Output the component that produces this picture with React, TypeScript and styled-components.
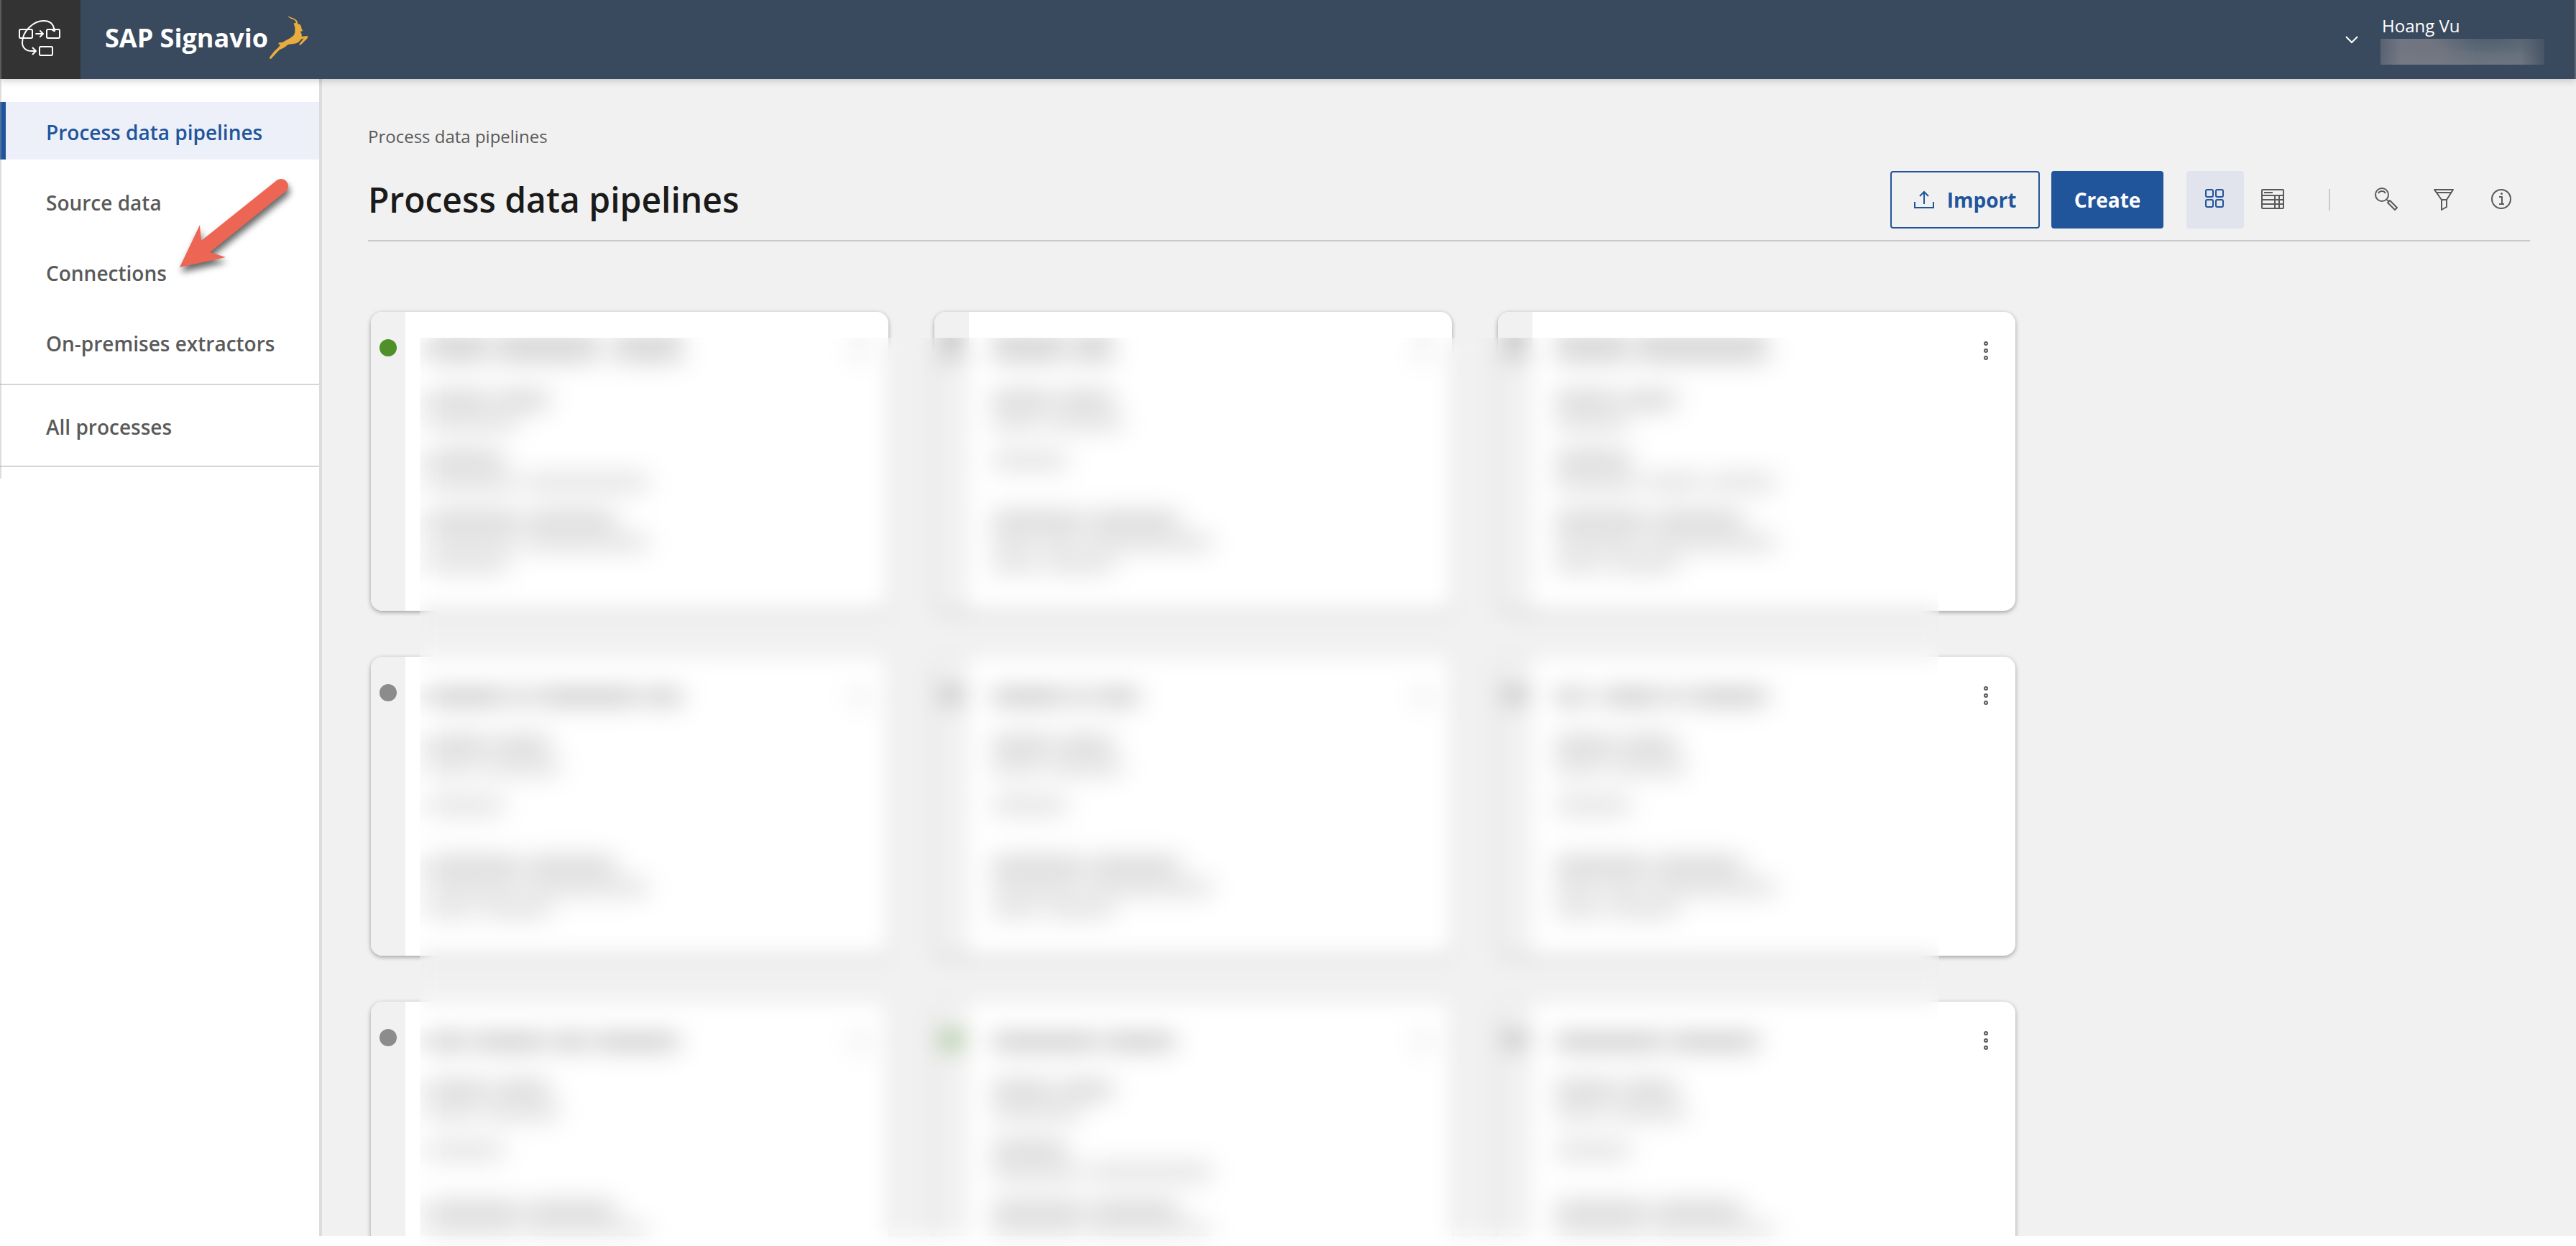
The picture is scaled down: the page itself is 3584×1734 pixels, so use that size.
import React from "react";
import styled, { createGlobalStyle, css } from "styled-components";

const GlobalStyle = createGlobalStyle`
  *, *::before, *::after { box-sizing: border-box; }
  html, body { margin: 0; padding: 0; background: #fff; }
  body, button { font-family: "Open Sans", "Noto Sans", sans-serif; }
  button { margin: 0; padding: 0; border: 0; background: none; cursor: pointer; }
  h1, h2, p, ul { margin: 0; padding: 0; }
  svg { display: block; flex: none; }
`;

const colors = {
  navy: "#39495e",
  dark: "#333333",
  blue: "#21559b",
  text: "#5a5a5a",
  heading: "#1a1a1a",
  line: "#d5d5d5",
  canvas: "#f1f1f1",
};

/* ---------- shell ---------- */

const Page = styled.div`
  position: relative;
  display: flex;
  flex-direction: column;
  height: 100vh;
  overflow: hidden;
  background: #fff;
`;

const WindowEdge = styled.span<{ $side: "left" | "right" }>`
  position: absolute;
  z-index: 5;
  top: 0;
  ${(p) => (p.$side === "left" ? "left: 0;" : "right: 0;")}
  width: 2px;
  height: ${(p) => (p.$side === "left" ? "666px" : "110px")};
  background: rgba(163, 163, 163, 0.37);
`;

const Header = styled.header`
  position: relative;
  z-index: 3;
  display: flex;
  align-items: flex-start;
  flex: none;
  height: 110px;
  padding-right: 44px;
  background: ${colors.navy};
  color: #fff;
  box-shadow: 0 2px 10px rgba(0, 0, 0, 0.2);
`;

const Launcher = styled.button`
  width: 112px;
  height: 110px;
  background: ${colors.dark};
`;

const Brand = styled.a`
  display: flex;
  align-items: flex-start;
  padding: 20px 0 0 34px;
  color: #fff;
  text-decoration: none;
`;

const BrandName = styled.span`
  width: 226px;
  font-size: 36px;
  font-weight: 700;
  line-height: 66px;
  white-space: nowrap;
`;

const Account = styled.div`
  display: flex;
  margin-left: auto;
  gap: 20px;
`;

const AccountToggle = styled.button`
  display: flex;
  align-items: center;
  justify-content: center;
  width: 40px;
  height: 110px;
  color: #fff;
`;

const AccountText = styled.div`
  width: 228px;
  padding-top: 20px;
`;

const AccountName = styled.p`
  padding-left: 2px;
  margin-bottom: 2px;
  font-size: 24px;
  font-weight: 500;
  line-height: 32px;
`;

const AccountHidden = styled.div`
  height: 36px;
  background:
    linear-gradient(90deg, rgba(57, 73, 94, 0.45), transparent 12%, transparent 86%, rgba(57, 73, 94, 0.7)),
    radial-gradient(ellipse at 66% 0, rgba(70, 86, 104, 0.6), transparent 40%),
    linear-gradient(180deg, transparent 40%, rgba(120, 126, 136, 0.5)),
    linear-gradient(90deg, #727682, #70747f 38%, #616c7a 58%, #646e7a);
`;

const Body = styled.div`
  display: flex;
  flex: 1;
  min-height: 0;
`;

/* ---------- side navigation ---------- */

const Sidebar = styled.nav`
  position: relative;
  flex: none;
  width: 448px;
  margin-bottom: 14px;
  border-right: 4px solid #dcdcdc;
  background: #fff;
`;

const NavGroup = styled.ul<{ $first?: boolean }>`
  display: flex;
  flex-direction: column;
  gap: 18px;
  padding: ${(p) => (p.$first ? "32px 0 18px" : "16px 0")};
  border-bottom: 2px solid ${colors.line};
  list-style: none;
`;

const NavLink = styled.a<{ $active?: boolean }>`
  display: block;
  padding: 4px 0 0 56px;
  border-left: 8px solid transparent;
  color: ${colors.text};
  font-size: 28px;
  font-weight: 600;
  line-height: 76px;
  text-decoration: none;
  ${(p) =>
    p.$active &&
    css`
      border-left-color: ${colors.blue};
      background: #edf0f9;
      color: ${colors.blue};
    `}
`;

const Pointer = styled.svg`
  position: absolute;
  top: 126px;
  left: 236px;
  filter: drop-shadow(2px 7px 5px rgba(0, 0, 0, 0.6));
`;

/* ---------- main area ---------- */

const Main = styled.main`
  position: relative;
  flex: 1;
  min-width: 0;
`;

const Canvas = styled.div`
  height: calc(100% - 14px);
  overflow: hidden;
  padding: 60px 64px 0;
  background: ${colors.canvas};
`;

const Breadcrumb = styled.p`
  color: ${colors.text};
  font-size: 24px;
  line-height: 40px;
`;

const TitleBar = styled.div`
  display: flex;
  align-items: flex-start;
  padding: 28px 0 16px;
  border-bottom: 2px solid #c9c9c9;
`;

const Title = styled.h1`
  flex: 1;
  color: ${colors.heading};
  font-size: 48px;
  font-weight: 600;
  line-height: 80px;
`;

const ActionButton = styled.button<{ $primary?: boolean }>`
  display: flex;
  align-items: center;
  justify-content: center;
  gap: 18px;
  width: ${(p) => (p.$primary ? "156px" : "208px")};
  height: 80px;
  margin-right: ${(p) => (p.$primary ? "32px" : "16px")};
  border: 2px solid ${colors.blue};
  border-radius: 4px;
  background: ${(p) => (p.$primary ? colors.blue : "transparent")};
  color: ${(p) => (p.$primary ? "#fff" : colors.blue)};
  font-size: 28px;
  font-weight: 700;
`;

const IconButton = styled.button<{ $active?: boolean }>`
  display: flex;
  align-items: center;
  justify-content: center;
  width: 80px;
  height: 80px;
  border-radius: 4px;
  background: ${(p) => (p.$active ? "#e1e4ed" : "transparent")};
  color: ${(p) => (p.$active ? colors.blue : colors.text)};
`;

const Separator = styled.span`
  width: 2px;
  height: 30px;
  margin: 25px 38px;
  background: #c9c9c9;
`;

const CardGrid = styled.section`
  display: grid;
  grid-template-columns: repeat(auto-fill, 720px);
  gap: 64px;
  padding: 98px 0 0 4px;
`;

/* ---------- cards ---------- */

const CardBox = styled.article`
  display: flex;
  height: 416px;
  overflow: hidden;
  border-radius: 16px;
  background: #fff;
  box-shadow: 0 2px 6px rgba(0, 0, 0, 0.35);
`;

const StatusStrip = styled.div`
  flex: none;
  width: 48px;
  padding-top: 36px;
  background: ${colors.canvas};
`;

const DotHolder = styled.div`
  display: flex;
  justify-content: center;
  padding-top: 2px;
  clip-path: inset(0 -60px -60px -60px);
`;

const veil = css`
  filter: blur(12px);
`;

const StatusDot = styled.span<{ $on: boolean; $veiled: boolean }>`
  width: 24px;
  height: 24px;
  border-radius: 50%;
  background: ${(p) => (p.$on ? "#50902a" : "#8c8c8c")};
  ${(p) => p.$veiled && veil}
`;

const CardBody = styled.div`
  flex: 1;
  padding: 34px 21px 0 32px;
  clip-path: inset(36px 0 0 20px);
`;

const CardHead = styled.div`
  display: flex;
  justify-content: space-between;
  height: 40px;
  margin-bottom: 34px;
`;

const MenuButton = styled.button<{ $veiled: boolean }>`
  display: flex;
  align-items: center;
  justify-content: center;
  width: 40px;
  height: 40px;
  ${(p) => p.$veiled && veil}
`;

const Field = styled.div`
  min-height: 60px;
  margin-bottom: 24px;
`;

const Line = styled.div<{ $tall?: boolean }>`
  display: flex;
  align-items: center;
  gap: 10px;
  height: ${(p) => (p.$tall ? "40px" : "30px")};
  ${veil}
`;

type Tone = "title" | "label" | "value";
const tones: Record<Tone, { h: number; c: string }> = {
  title: { h: 24, c: "#c4c4c4" },
  label: { h: 20, c: "#c8c8c8" },
  value: { h: 18, c: "#d4d4d4" },
};

const Word = styled.span<{ $tone: Tone }>`
  height: ${(p) => tones[p.$tone].h}px;
  border-radius: 4px;
  background: ${(p) => tones[p.$tone].c};
`;

const PrivacyMask = styled.div`
  position: absolute;
  z-index: 2;
  top: 360px;
  bottom: 0;
  left: 136px;
  width: 2114px;
  backdrop-filter: blur(14px);
`;

/* ---------- icons ---------- */

const LauncherIcon = () => (
  <svg width="112" height="110" viewBox="0 0 336 330" fill="none" stroke="#fff" strokeWidth="6" strokeLinejoin="round" aria-hidden="true">
    <rect x="81" y="123" width="54" height="36" rx="5" />
    <rect x="195" y="123" width="54" height="36" rx="5" />
    <rect x="165" y="195" width="54" height="36" rx="5" />
    <path d="M148 141H180M166 127L180 141L166 155" />
    <path d="M226 126C224 100 208 87 182 87C140 87 93 130 93 178C93 200 110 213 132 213H149M135 198L150 213L135 228" />
    <path d="M217 124L227 130L232 120" />
  </svg>
);

const Stag = () => (
  <svg width="60" height="64" viewBox="1116 60 180 192" fill="#e8ad3c" aria-hidden="true">
    <path d="M1200 66C1208 72 1226 74 1235 82C1241 88 1243 94 1243 100L1252 102L1257 110L1259 121L1264 130L1253 131L1259 142L1259 152L1285 150L1283 160L1256 187L1248 188L1250 183L1268 160L1256 164C1250 174 1242 180 1230 182L1202 186C1192 196 1180 203 1168 207L1155 220L1132 245L1125 245L1126 238L1145 214C1152 206 1160 201 1164 196L1170 186L1161 184L1165 178L1178 177C1190 170 1216 158 1227 146L1231 134L1231 116L1226 96L1235 97C1236 90 1231 84 1224 81C1214 78 1204 74 1200 66Z" />
  </svg>
);

const ChevronIcon = () => (
  <svg width="20" height="12" viewBox="0 0 20 12" fill="none" stroke="currentColor" strokeWidth="2" aria-hidden="true">
    <path d="M2 2L10 10L18 2" />
  </svg>
);

const UploadIcon = () => (
  <svg width="28" height="28" viewBox="0 0 28 28" fill="none" stroke="currentColor" strokeWidth="2" aria-hidden="true">
    <path d="M14 20V3M8 9L14 3L20 9M1 17V25H27V17" />
  </svg>
);

const Glyph = ({ children }: { children: React.ReactNode }) => (
  <svg width="40" height="40" viewBox="0 0 40 40" fill="none" stroke="currentColor" strokeWidth="2" strokeLinejoin="round" aria-hidden="true">
    {children}
  </svg>
);

const TilesIcon = () => (
  <Glyph>
    <rect x="7" y="6" width="10" height="10" rx="2" />
    <rect x="21" y="6" width="10" height="10" rx="2" />
    <rect x="7" y="20" width="10" height="10" rx="2" />
    <rect x="21" y="20" width="10" height="10" rx="2" />
  </Glyph>
);

const TableIcon = () => (
  <Glyph>
    <rect x="5" y="6" width="30" height="26" rx="1" />
    <path d="M8 10H20M5 14H35M5 20H35M5 26H35M23 14V32M29 14V32" />
  </Glyph>
);

const SearchIcon = () => (
  <Glyph>
    <circle cx="14" cy="13" r="9" />
    <path d="M9 11C11 7 17 7 19 11M21 20L23 22M22 24L25 21L35 31L32 34Z" />
  </Glyph>
);

const FilterIcon = () => (
  <Glyph>
    <path d="M7 6H33L24 20V30L17 34V20ZM9 10H31M17 20H24" />
  </Glyph>
);

const InfoIcon = () => (
  <Glyph>
    <circle cx="20" cy="19" r="13" />
    <circle cx="20.500" cy="11.500" r="1.500" fill="currentColor" stroke="none" />
    <path d="M17 16H21V26M17 26H24" />
  </Glyph>
);

const KebabIcon = () => (
  <svg width="10" height="28" viewBox="0 0 10 28" fill="#fff" stroke={colors.text} strokeWidth="2" aria-hidden="true">
    <circle cx="5" cy="4" r="2" />
    <circle cx="5" cy="14" r="2" />
    <circle cx="5" cy="24" r="2" />
  </svg>
);

/* ---------- data ---------- */

interface Pipeline {
  on?: boolean;
  title: number[];
  status: number[];
  lastRun?: number[];
  changed: number[];
  author: number[];
  hideDot?: boolean;
  hideMenu?: boolean;
}

const notRun = [66, 106];
const first = { hideMenu: true };
const middle = { hideDot: true, hideMenu: true };
const last = { hideDot: true };

const pipelines: Pipeline[] = [
  { ...first, on: true, title: [84, 140, 6, 94], status: [124], lastRun: [124, 172], changed: [124, 172], author: [110] },
  { ...middle, title: [102, 58], status: notRun, changed: [58, 54, 174], author: [64, 96] },
  { ...last, title: [102, 184], status: [102], lastRun: [116, 78, 92], changed: [116, 180], author: [64, 96] },
  { ...first, title: [108, 26, 138, 50], status: notRun, changed: [124, 172], author: [64, 96] },
  { ...middle, title: [102, 26, 56], status: notRun, changed: [124, 172], author: [64, 96] },
  { ...last, title: [40, 8, 78, 24, 104], status: notRun, changed: [58, 54, 174], author: [64, 96] },
  { ...first, title: [54, 98, 50, 116], status: notRun, changed: [124, 172], author: [64, 96] },
  { ...middle, on: true, title: [146, 98], status: [124], lastRun: [124, 172], changed: [124, 172], author: [64, 96] },
  { ...last, title: [150, 122], status: notRun, changed: [124, 172], author: [64, 96] },
];

const Words = ({ tone, widths }: { tone: Tone; widths: number[] }) => (
  <Line $tall={tone === "title"}>
    {widths.map((width, i) => (
      <Word key={i} $tone={tone} style={{ width }} />
    ))}
  </Line>
);

const Card = ({ item }: { item: Pipeline }) => (
  <CardBox>
    <StatusStrip>
      <DotHolder>
        <StatusDot $on={!!item.on} $veiled={!!item.hideDot} />
      </DotHolder>
    </StatusStrip>
    <CardBody>
      <CardHead>
        <Words tone="title" widths={item.title} />
        <MenuButton $veiled={!!item.hideMenu} aria-label="More actions">
          <KebabIcon />
        </MenuButton>
      </CardHead>
      <Field>
        <Words tone="label" widths={[84, 74]} />
        <Words tone="value" widths={item.status} />
      </Field>
      <Field>
        <Words tone={item.lastRun ? "label" : "value"} widths={[104]} />
        {item.lastRun && <Words tone="value" widths={item.lastRun} />}
      </Field>
      <Field>
        <Words tone="label" widths={[128, 122]} />
        <Words tone="value" widths={item.changed} />
        <Words tone="value" widths={item.author} />
      </Field>
    </CardBody>
  </CardBox>
);

export default function App() {
  return (
    <Page>
      <GlobalStyle />
      <WindowEdge $side="left" />
      <WindowEdge $side="right" />
      <Header>
        <Launcher aria-label="Open launcher">
          <LauncherIcon />
        </Launcher>
        <Brand href="#home">
          <BrandName>SAP Signavio</BrandName>
          <Stag />
        </Brand>
        <Account>
          <AccountToggle aria-label="Account menu">
            <ChevronIcon />
          </AccountToggle>
          <AccountText>
            <AccountName>Hoang Vu</AccountName>
            <AccountHidden />
          </AccountText>
        </Account>
      </Header>
      <Body>
        <Sidebar>
          <NavGroup $first>
            <li><NavLink href="#pipelines" $active aria-current="page">Process data pipelines</NavLink></li>
            <li><NavLink href="#source-data">Source data</NavLink></li>
            <li><NavLink href="#connections">Connections</NavLink></li>
            <li><NavLink href="#extractors">On-premises extractors</NavLink></li>
          </NavGroup>
          <NavGroup>
            <li><NavLink href="#processes">All processes</NavLink></li>
          </NavGroup>
          <Pointer width="180" height="150" viewBox="236 236 180 150" fill="#ed6553" aria-hidden="true">
            <path d="M250 372L278 313L280 335L385 251A10 10 0 0 1 399 265L292 351L314 358Z" />
          </Pointer>
        </Sidebar>
        <Main>
          <Canvas>
            <Breadcrumb>Process data pipelines</Breadcrumb>
            <TitleBar>
              <Title>Process data pipelines</Title>
              <ActionButton>
                <UploadIcon />
                Import
              </ActionButton>
              <ActionButton $primary>Create</ActionButton>
              <IconButton $active aria-label="Tile view"><TilesIcon /></IconButton>
              <IconButton aria-label="Table view"><TableIcon /></IconButton>
              <Separator />
              <IconButton aria-label="Search"><SearchIcon /></IconButton>
              <IconButton aria-label="Filter"><FilterIcon /></IconButton>
              <IconButton aria-label="Information"><InfoIcon /></IconButton>
            </TitleBar>
            <CardGrid>
              {pipelines.map((item, i) => (
                <Card key={i} item={item} />
              ))}
            </CardGrid>
          </Canvas>
          <PrivacyMask />
        </Main>
      </Body>
    </Page>
  );
}
